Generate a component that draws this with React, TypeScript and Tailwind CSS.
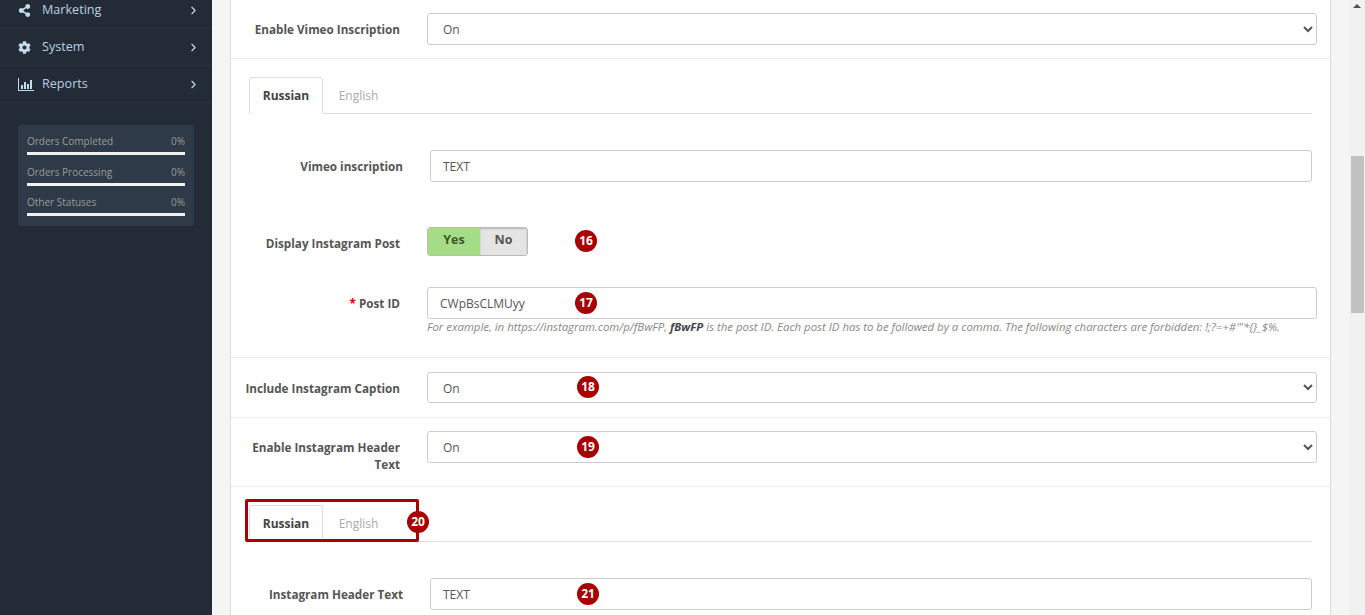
import { ChevronRight } from "lucide-react";
import { FaShareAlt, FaCog } from "react-icons/fa";

const BarsIcon = ({ className }: { className?: string }) => (
  <svg viewBox="0 0 16 13" width={16} height={13} className={className} fill="currentColor">
    <path d="M0 0h1v12h15v1H0z" />
    <path d="M3 7h2v4H3zM6 4h2v7H6zM9 6h2v5H9zM12 2h2v9h-2z" />
  </svg>
);

const menu = [
  { label: "Marketing", Icon: FaShareAlt },
  { label: "System", Icon: FaCog },
  { label: "Reports", Icon: BarsIcon },
];

const stats = ["Orders Completed", "Orders Processing", "Other Statuses"];

const Badge = ({ n, className }: { n: number; className: string }) => (
  <span className={`absolute flex h-[22px] w-[22px] items-center justify-center rounded-full bg-[#a80000] text-[12px] font-bold text-white ${className}`}>
    {n}
  </span>
);

const Label = ({ children, className = "" }: { children: React.ReactNode; className?: string }) => (
  <label className={`shrink-0 pt-2 text-right text-[11.7px] font-bold leading-[17px] text-[#555] ${className}`}>{children}</label>
);

const Select = ({ className = "h-8" }: { className?: string }) => (
  <select className={`w-[890px] rounded-[3px] border border-[#ccc] bg-white pl-[11px] pr-1 pt-px text-[12px] text-[#555] ${className}`}>
    <option>On</option>
    <option>Off</option>
  </select>
);

const TextInput = ({ value, className }: { value: string; className: string }) => (
  <input
    defaultValue={value}
    className={`h-8 rounded-[3px] border border-[#ccc] bg-white pl-3 pr-2 text-[12px] text-[#555] ${className}`}
  />
);

const Tabs = () => (
  <div className="flex h-[37px] border-b border-[#ddd] text-[12px]">
    <div className="flex h-[37px] w-[74px] items-center justify-center rounded-t-[3px] border border-[#ddd] border-b-white bg-white font-bold text-[#444]">
      Russian
    </div>
    <div className="flex w-[71px] items-center justify-center pt-px text-[#aaa]">English</div>
  </div>
);

const LangField = ({ label, badge }: { label: string; badge?: React.ReactNode }) => (
  <div className="relative mt-9 flex gap-[27px]">
    <Label className="w-[154px]">{label}</Label>
    <TextInput value="TEXT" className="w-[882px]" />
    {badge}
  </div>
);

export default function App() {
  return (
    <div className="flex h-[615px] overflow-hidden bg-[#f5f5f5] font-['Open_Sans',sans-serif]">
      {/* Sidebar */}
      <aside className="h-full w-[212px] shrink-0 bg-[#232b36]">
        <ul className="-mt-2 text-[12.6px] text-[#b8d0e2]">
          {menu.map(({ label, Icon }) => (
            <li key={label} className="flex h-[37px] items-center border-b border-[#2b3541] pl-[18px] pr-3">
              <span className="w-6 shrink-0 text-[#c4dbec]">
                <Icon size={13} />
              </span>
              <span className="flex-1">{label}</span>
              <ChevronRight size={13} strokeWidth={2} className="text-[#c4dbec]" />
            </li>
          ))}
        </ul>
        <div className="ml-[18px] mt-[22px] w-[176px] rounded-[2px] bg-[#2e3a47] px-[9px] pb-2.5 pt-[9px]">
          {stats.map((s) => (
            <div key={s} className="mb-[9.5px] last:mb-0">
              <div className="flex justify-between text-[10px] leading-[14px] text-[#9a9a9a]">
                <span>{s}</span>
                <span>0%</span>
              </div>
              <div className="mt-1 h-[3px] bg-[#f1f1f1]" />
            </div>
          ))}
        </div>
      </aside>

      {/* Form panel */}
      <main className="ml-[18px] mr-[18px] h-full w-[1101px] shrink-0 border-x border-[#ddd] bg-white">
        <div className="flex gap-[27px] border-b border-[#eee] pb-[13px] pl-[14px] pt-[13px]">
          <Label className="w-[155px]">Enable Vimeo Inscription</Label>
          <Select />
        </div>

        <div className="px-[18px] pt-[18px]">
          <Tabs />
          <LangField label="Vimeo inscription" />
        </div>

        <div className="relative mt-[45px] flex gap-[27px] pl-[14px]">
          <Label className="w-[155px]">Display Instagram Post</Label>
          <div className="flex h-[29px] w-[101px] overflow-hidden rounded-[3px] border border-[#bbb] text-[12.5px] font-bold shadow-[inset_0_1px_2px_rgba(0,0,0,0.2)]">
            <span className="flex w-[52px] items-center justify-center bg-[#a5dc86] pb-0.5 text-[#3c5a2a]">Yes</span>
            <span className="flex flex-1 items-center justify-center bg-[#e4e4e4] pb-0.5 text-[#555] shadow-[inset_0_1px_2px_rgba(0,0,0,0.2)]">No</span>
          </div>
          <Badge n={16} className="left-[344px] top-[3px]" />
        </div>

        <div className="relative mt-[31px] flex gap-[27px] border-b border-[#eee] pb-[23px] pl-[14px]">
          <Label className="w-[155px]">
            <span className="text-[#c00]">*</span> Post ID
          </Label>
          <div>
            <TextInput value="CWpBsCLMUyy" className="block w-[890px]" />
            <p className="text-[11.4px] italic leading-[15px] text-[#888]">
              For example, in https://instagram.com/p/fBwFP, <b className="text-[#444]">fBwFP</b> is the post ID. Each post ID has to be followed by a comma. The following characters are forbidden: !;?=+#'"*{"{}"}_$%.
            </p>
          </div>
          <Badge n={17} className="left-[344px] top-[5px]" />
        </div>

        <div className="relative flex gap-[27px] border-b border-[#eee] pb-[14px] pl-[14px] pt-[14px]">
          <Label className="w-[155px]">Include Instagram Caption</Label>
          <Select className="h-[31px]" />
          <Badge n={18} className="left-[346px] top-[18px]" />
        </div>

        <div className="relative flex gap-[27px] border-b border-[#eee] pb-[13px] pl-[14px] pt-[13px]">
          <Label className="w-[155px]">Enable Instagram Header Text</Label>
          <Select />
          <Badge n={19} className="left-[346px] top-[18px]" />
        </div>

        <div className="relative px-[18px] pt-[18px]">
          <Tabs />
          <div className="absolute left-[14px] top-[12px] h-[43px] w-[174px] rounded-[2px] border-[3px] border-[#a80000]" />
          <Badge n={20} className="left-[176px] top-[24px]" />
          <LangField
            label="Instagram Header Text"
            badge={<Badge n={21} className="left-[328px] top-[5px]" />}
          />
        </div>
      </main>

      {/* Scrollbar */}
      <div className="ml-auto flex h-full w-4 shrink-0 flex-col items-center bg-[#f1f1f1]">
        <span className="mt-[4px] h-0 w-0 border-x-[4px] border-b-[4px] border-x-transparent border-b-[#505050]" />
        <div className="mt-[148px] h-[157px] w-[13px] bg-[#c1c1c1]" />
      </div>
    </div>
  );
}
